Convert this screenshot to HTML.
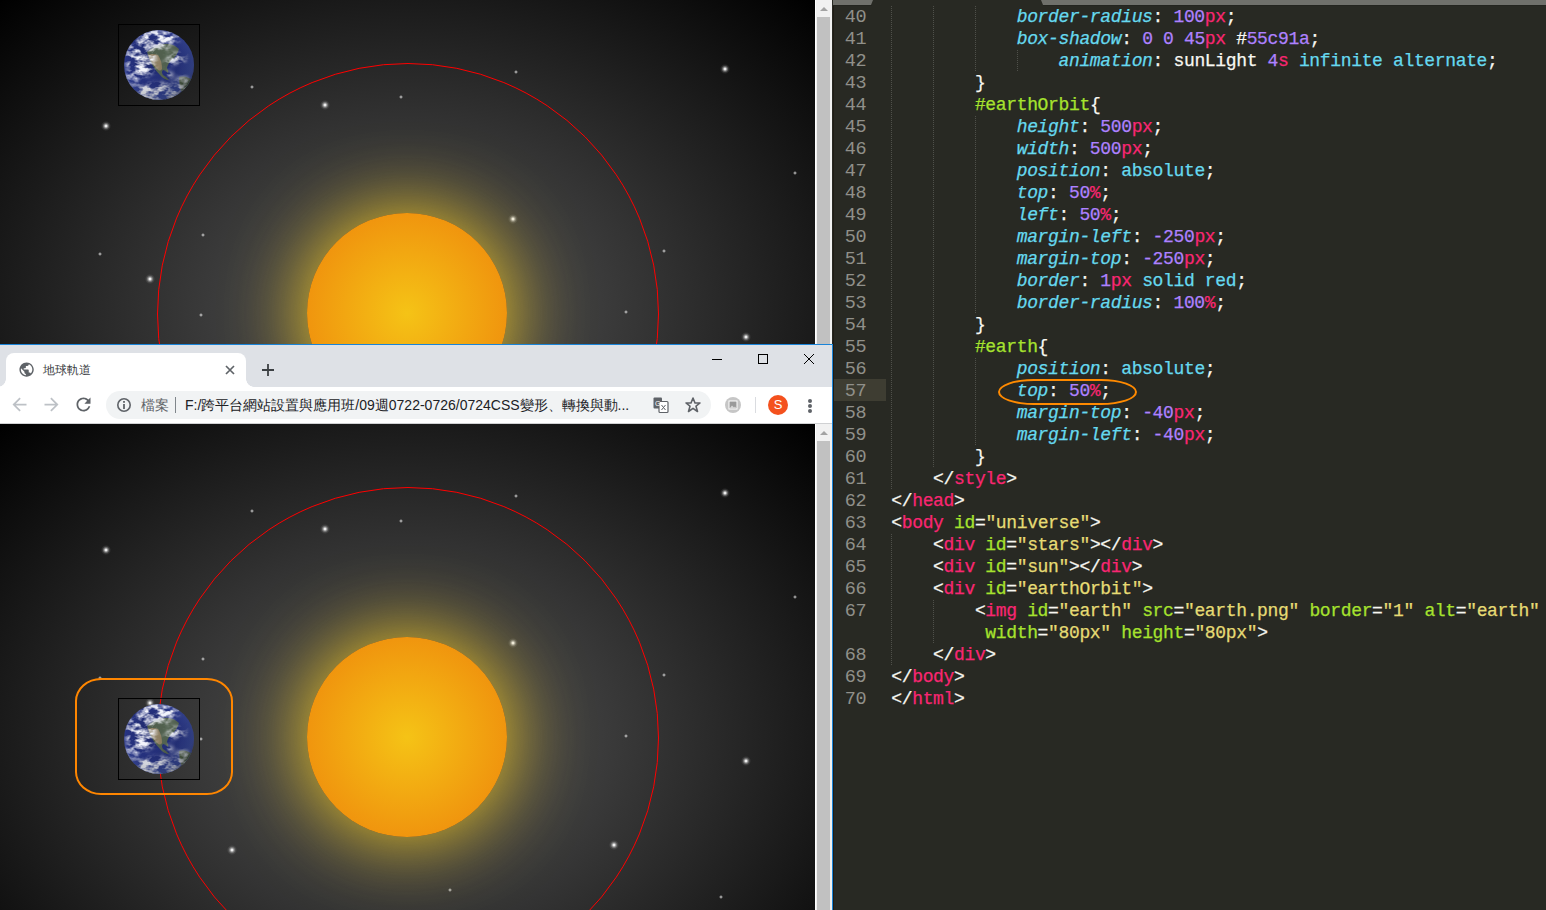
<!DOCTYPE html>
<html><head><meta charset="utf-8">
<style>
*{margin:0;padding:0;box-sizing:border-box}
html,body{width:1546px;height:910px;overflow:hidden;background:#272822;position:relative;font-family:"Liberation Sans",sans-serif}
.abs{position:absolute}
.view{position:absolute;left:0;width:815px;overflow:hidden}
.scene{position:absolute;left:0;top:0;width:815px;height:627px;background:radial-gradient(ellipse farthest-corner at 50% 50%,#595959 0%,#000 100%)}
.sb{position:absolute;width:10px;height:10px;background:radial-gradient(circle closest-side,rgba(255,255,255,1) 0,rgba(255,255,255,.9) 17%,rgba(255,255,255,.45) 40%,rgba(255,255,255,.12) 70%,rgba(255,255,255,0) 100%)}
.ss{position:absolute;width:4px;height:4px;background:radial-gradient(circle closest-side,rgba(255,255,255,.85) 0,rgba(255,255,255,.45) 45%,rgba(255,255,255,0) 100%)}
.sun{position:absolute;left:307px;top:213px;width:200px;height:200px;border-radius:50%;background:radial-gradient(circle closest-side,#f5c316 0%,#f0950e 100%);box-shadow:0 0 80px #f6cc1c}
.glow{display:none}
.orbit{position:absolute;left:157px;top:63px;width:502px;height:502px;border:1px solid #f00;border-radius:50%}
.earth{position:absolute;left:118px;width:82px;height:82px;border:1px solid #000}
.earth svg{position:absolute;left:0;top:0}
.sbar{position:absolute;left:815px;width:17px;background:#f1f1f1;border-left:1px solid #fff}
.sbar .thumb{position:absolute;left:1px;right:2px;top:17px;bottom:0;background:#c1c1c1}
.sbar .arr{position:absolute;left:3.5px;top:7px;width:0;height:0;border-left:4px solid transparent;border-right:4px solid transparent;border-bottom:4px solid #a3a3a3}
#ed{position:absolute;left:833px;top:0;width:713px;height:910px;background:#282923;font-family:"Liberation Mono",monospace;font-size:18px;letter-spacing:-0.35px;line-height:22px}
.ln{position:absolute;left:0;width:33px;margin-top:1px;text-align:right;color:#90908a;font-size:18.5px;letter-spacing:-0.5px}
.cl{position:absolute;white-space:pre;color:#f8f8f2;-webkit-text-stroke:0.25px currentColor}
.cl b{font-weight:normal;color:#f8f8f2}
.cl i{font-style:italic}
.ig{position:absolute;width:1px;height:22px;background:repeating-linear-gradient(to bottom,#4f504a 0 1px,transparent 1px 2px)}
</style></head><body>
<div class="view" style="top:0;height:344px"><div class="scene" style="top:0"><div class="sb" style="left:101.0px;top:121.0px"></div><div class="ss" style="left:249.6px;top:84.6px"></div><div class="sb" style="left:320.0px;top:100.0px"></div><div class="ss" style="left:398.6px;top:95.1px"></div><div class="ss" style="left:514.1px;top:70.1px"></div><div class="sb" style="left:720.0px;top:64.0px"></div><div class="ss" style="left:793.1px;top:171.1px"></div><div class="sb" style="left:508.0px;top:214.0px"></div><div class="ss" style="left:200.5px;top:233.1px"></div><div class="ss" style="left:661.9px;top:249.1px"></div><div class="sb" style="left:144.5px;top:274.0px"></div><div class="ss" style="left:98.1px;top:252.1px"></div><div class="ss" style="left:199.4px;top:313.1px"></div><div class="ss" style="left:623.5px;top:310.1px"></div><div class="sb" style="left:740.6px;top:331.5px"></div><div class="sb" style="left:227.3px;top:420.7px"></div><div class="sb" style="left:608.6px;top:415.9px"></div><div class="ss" style="left:447.8px;top:464.1px"></div><div class="ss" style="left:718.6px;top:470.8px"></div><div class="glow"></div><div class="sun"></div><div class="orbit"></div><div class="earth" style="top:24px"><svg width="80" height="80" viewBox="0 0 80 80"><defs><radialGradient id="oc" cx="42%" cy="42%" r="54%"><stop offset="0" stop-color="#1e2868"/><stop offset=".6" stop-color="#263280"/><stop offset=".86" stop-color="#3a4aa0"/><stop offset="1" stop-color="#4a5ab0"/></radialGradient><radialGradient id="sh" cx="30%" cy="30%" r="78%"><stop offset=".5" stop-color="#000" stop-opacity="0"/><stop offset=".85" stop-color="#000814" stop-opacity=".3"/><stop offset="1" stop-color="#000" stop-opacity=".6"/></radialGradient><filter id="tx" x="0" y="0" width="100%" height="100%"><feTurbulence type="fractalNoise" baseFrequency="0.1 0.16" numOctaves="3" seed="7"/><feColorMatrix values="0 0 0 0 .9  0 0 0 0 .91  0 0 0 0 .97  3.8 0 0 0 -1.45"/></filter><filter id="bl" x="-20%" y="-20%" width="140%" height="140%"><feGaussianBlur stdDeviation="2"/></filter><filter id="bl2" x="-20%" y="-20%" width="140%" height="140%"><feGaussianBlur stdDeviation=".5"/></filter><mask id="cm"><g filter="url(#bl)" fill="#fff"><ellipse cx="22" cy="34" rx="15" ry="19" opacity="1"/><ellipse cx="40" cy="12" rx="22" ry="8" opacity="1"/><ellipse cx="40" cy="68" rx="30" ry="10" opacity="1"/><ellipse cx="58" cy="33" rx="10" ry="5" opacity="1"/><ellipse cx="64" cy="58" rx="8" ry="7" opacity=".8"/><ellipse cx="50" cy="50" rx="5" ry="3" opacity=".8"/><ellipse cx="14" cy="52" rx="8" ry="8" opacity=".7"/><ellipse cx="42" cy="22" rx="9" ry="5" opacity=".75"/><ellipse cx="50" cy="38" rx="6" ry="3" opacity=".7"/><ellipse cx="34" cy="44" rx="5" ry="3" opacity=".7"/></g></mask><clipPath id="ec"><circle cx="40" cy="40" r="35"/></clipPath></defs>
<g clip-path="url(#ec)"><rect width="80" height="80" fill="url(#oc)"/>
<g filter="url(#bl2)"><path d="M28 27 Q34 21 44 19 Q54 18 60 24 Q58 31 53 35 Q49 38 48 43 Q50 46 49 48 Q46 45 44 45 Q42 47 44 50 Q48 52 50 55 Q45 55 41 50 Q37 46 34 41 Q30 35 28 27Z" fill="#5a6a48" opacity=".85"/><path d="M29 30 Q33 28 39 30 Q43 36 43 44 Q41 47 38 44 Q33 39 29 30Z" fill="#958060" opacity=".85"/><path d="M60 52 Q67 50 73 55 Q72 66 64 70 Q60 62 60 52Z" fill="#56664a"/></g>
<rect width="80" height="80" filter="url(#tx)" mask="url(#cm)"/>
<rect width="80" height="80" fill="url(#sh)"/></g></svg>
</div></div></div>
<div class="sbar" style="top:0;height:344px"><div class="arr"></div><div class="thumb"></div></div>
<div id="ed">
<div class="abs" style="left:0;top:0;width:1px;height:910px;background:#1f1c15"></div>
<div class="abs" style="left:0;top:0;width:40px;height:5px;background:#6f706b;clip-path:polygon(0 0,40px 0,38px 5px,0 5px)"></div><div class="abs" style="left:0;top:5px;width:39px;height:1px;background:#23241f"></div><div class="abs" style="left:210px;top:5px;width:503px;height:1px;background:#23241f"></div>
<div class="abs" style="left:208px;top:0;width:505px;height:5px;background:#6f706b;clip-path:polygon(0 0,505px 0,505px 5px,2px 5px)"></div>
<div class="abs" style="left:1px;top:379px;width:52px;height:22px;background:#3e3d32"></div>
<div class="ig" style="top:6px;left:58.3px"></div><div class="ig" style="top:6px;left:100.1px"></div><div class="ig" style="top:6px;left:141.9px"></div><div class="ig" style="top:28px;left:58.3px"></div><div class="ig" style="top:28px;left:100.1px"></div><div class="ig" style="top:28px;left:141.9px"></div><div class="ig" style="top:50px;left:58.3px"></div><div class="ig" style="top:50px;left:100.1px"></div><div class="ig" style="top:50px;left:141.9px"></div><div class="ig" style="top:50px;left:183.7px"></div><div class="ig" style="top:72px;left:58.3px"></div><div class="ig" style="top:72px;left:100.1px"></div><div class="ig" style="top:94px;left:58.3px"></div><div class="ig" style="top:94px;left:100.1px"></div><div class="ig" style="top:116px;left:58.3px"></div><div class="ig" style="top:116px;left:100.1px"></div><div class="ig" style="top:116px;left:141.9px"></div><div class="ig" style="top:138px;left:58.3px"></div><div class="ig" style="top:138px;left:100.1px"></div><div class="ig" style="top:138px;left:141.9px"></div><div class="ig" style="top:160px;left:58.3px"></div><div class="ig" style="top:160px;left:100.1px"></div><div class="ig" style="top:160px;left:141.9px"></div><div class="ig" style="top:182px;left:58.3px"></div><div class="ig" style="top:182px;left:100.1px"></div><div class="ig" style="top:182px;left:141.9px"></div><div class="ig" style="top:204px;left:58.3px"></div><div class="ig" style="top:204px;left:100.1px"></div><div class="ig" style="top:204px;left:141.9px"></div><div class="ig" style="top:226px;left:58.3px"></div><div class="ig" style="top:226px;left:100.1px"></div><div class="ig" style="top:226px;left:141.9px"></div><div class="ig" style="top:248px;left:58.3px"></div><div class="ig" style="top:248px;left:100.1px"></div><div class="ig" style="top:248px;left:141.9px"></div><div class="ig" style="top:270px;left:58.3px"></div><div class="ig" style="top:270px;left:100.1px"></div><div class="ig" style="top:270px;left:141.9px"></div><div class="ig" style="top:292px;left:58.3px"></div><div class="ig" style="top:292px;left:100.1px"></div><div class="ig" style="top:292px;left:141.9px"></div><div class="ig" style="top:314px;left:58.3px"></div><div class="ig" style="top:314px;left:100.1px"></div><div class="ig" style="top:336px;left:58.3px"></div><div class="ig" style="top:336px;left:100.1px"></div><div class="ig" style="top:358px;left:58.3px"></div><div class="ig" style="top:358px;left:100.1px"></div><div class="ig" style="top:358px;left:141.9px"></div><div class="ig" style="top:380px;left:58.3px"></div><div class="ig" style="top:380px;left:100.1px"></div><div class="ig" style="top:380px;left:141.9px"></div><div class="ig" style="top:402px;left:58.3px"></div><div class="ig" style="top:402px;left:100.1px"></div><div class="ig" style="top:402px;left:141.9px"></div><div class="ig" style="top:424px;left:58.3px"></div><div class="ig" style="top:424px;left:100.1px"></div><div class="ig" style="top:424px;left:141.9px"></div><div class="ig" style="top:446px;left:58.3px"></div><div class="ig" style="top:446px;left:100.1px"></div><div class="ig" style="top:468px;left:58.3px"></div><div class="ig" style="top:534px;left:58.3px"></div><div class="ig" style="top:556px;left:58.3px"></div><div class="ig" style="top:578px;left:58.3px"></div><div class="ig" style="top:600px;left:58.3px"></div><div class="ig" style="top:600px;left:100.1px"></div><div class="ig" style="top:622px;left:58.3px"></div><div class="ig" style="top:622px;left:100.1px"></div><div class="ig" style="top:644px;left:58.3px"></div>
<div class="ln" style="top:6px">40</div><div class="cl" style="top:6px;left:183.70px"><i style="color:#66d9ef">border-radius</i><b>: </b><span style="color:#ae81ff">100</span><span style="color:#f92672">px</span><b>;</b></div><div class="ln" style="top:28px">41</div><div class="cl" style="top:28px;left:183.70px"><i style="color:#66d9ef">box-shadow</i><b>: </b><span style="color:#ae81ff">0</span><b> </b><span style="color:#ae81ff">0</span><b> </b><span style="color:#ae81ff">45</span><span style="color:#f92672">px</span><b> #</b><span style="color:#ae81ff">55c91a</span><b>;</b></div><div class="ln" style="top:50px">42</div><div class="cl" style="top:50px;left:225.50px"><i style="color:#66d9ef">animation</i><b>: </b><b>sunLight </b><span style="color:#ae81ff">4</span><span style="color:#f92672">s</span><b> </b><span style="color:#66d9ef">infinite alternate</span><b>;</b></div><div class="ln" style="top:72px">43</div><div class="cl" style="top:72px;left:141.90px"><b>}</b></div><div class="ln" style="top:94px">44</div><div class="cl" style="top:94px;left:141.90px"><span style="color:#a6e22e">#earthOrbit</span><b>{</b></div><div class="ln" style="top:116px">45</div><div class="cl" style="top:116px;left:183.70px"><i style="color:#66d9ef">height</i><b>: </b><span style="color:#ae81ff">500</span><span style="color:#f92672">px</span><b>;</b></div><div class="ln" style="top:138px">46</div><div class="cl" style="top:138px;left:183.70px"><i style="color:#66d9ef">width</i><b>: </b><span style="color:#ae81ff">500</span><span style="color:#f92672">px</span><b>;</b></div><div class="ln" style="top:160px">47</div><div class="cl" style="top:160px;left:183.70px"><i style="color:#66d9ef">position</i><b>: </b><span style="color:#66d9ef">absolute</span><b>;</b></div><div class="ln" style="top:182px">48</div><div class="cl" style="top:182px;left:183.70px"><i style="color:#66d9ef">top</i><b>: </b><span style="color:#ae81ff">50</span><span style="color:#f92672">%</span><b>;</b></div><div class="ln" style="top:204px">49</div><div class="cl" style="top:204px;left:183.70px"><i style="color:#66d9ef">left</i><b>: </b><span style="color:#ae81ff">50</span><span style="color:#f92672">%</span><b>;</b></div><div class="ln" style="top:226px">50</div><div class="cl" style="top:226px;left:183.70px"><i style="color:#66d9ef">margin-left</i><b>: </b><span style="color:#ae81ff">-250</span><span style="color:#f92672">px</span><b>;</b></div><div class="ln" style="top:248px">51</div><div class="cl" style="top:248px;left:183.70px"><i style="color:#66d9ef">margin-top</i><b>: </b><span style="color:#ae81ff">-250</span><span style="color:#f92672">px</span><b>;</b></div><div class="ln" style="top:270px">52</div><div class="cl" style="top:270px;left:183.70px"><i style="color:#66d9ef">border</i><b>: </b><span style="color:#ae81ff">1</span><span style="color:#f92672">px</span><b> </b><span style="color:#66d9ef">solid red</span><b>;</b></div><div class="ln" style="top:292px">53</div><div class="cl" style="top:292px;left:183.70px"><i style="color:#66d9ef">border-radius</i><b>: </b><span style="color:#ae81ff">100</span><span style="color:#f92672">%</span><b>;</b></div><div class="ln" style="top:314px">54</div><div class="cl" style="top:314px;left:141.90px"><b>}</b></div><div class="ln" style="top:336px">55</div><div class="cl" style="top:336px;left:141.90px"><span style="color:#a6e22e">#earth</span><b>{</b></div><div class="ln" style="top:358px">56</div><div class="cl" style="top:358px;left:183.70px"><i style="color:#66d9ef">position</i><b>: </b><span style="color:#66d9ef">absolute</span><b>;</b></div><div class="ln" style="top:380px">57</div><div class="cl" style="top:380px;left:183.70px"><i style="color:#66d9ef">top</i><b>: </b><span style="color:#ae81ff">50</span><span style="color:#f92672">%</span><b>;</b></div><div class="ln" style="top:402px">58</div><div class="cl" style="top:402px;left:183.70px"><i style="color:#66d9ef">margin-top</i><b>: </b><span style="color:#ae81ff">-40</span><span style="color:#f92672">px</span><b>;</b></div><div class="ln" style="top:424px">59</div><div class="cl" style="top:424px;left:183.70px"><i style="color:#66d9ef">margin-left</i><b>: </b><span style="color:#ae81ff">-40</span><span style="color:#f92672">px</span><b>;</b></div><div class="ln" style="top:446px">60</div><div class="cl" style="top:446px;left:141.90px"><b>}</b></div><div class="ln" style="top:468px">61</div><div class="cl" style="top:468px;left:100.10px"><b>&lt;/</b><span style="color:#f92672">style</span><b>&gt;</b></div><div class="ln" style="top:490px">62</div><div class="cl" style="top:490px;left:58.30px"><b>&lt;/</b><span style="color:#f92672">head</span><b>&gt;</b></div><div class="ln" style="top:512px">63</div><div class="cl" style="top:512px;left:58.30px"><b>&lt;</b><span style="color:#f92672">body</span><b> </b><span style="color:#a6e22e">id</span><b>=</b><span style="color:#e6db74">"universe"</span><b>&gt;</b></div><div class="ln" style="top:534px">64</div><div class="cl" style="top:534px;left:100.10px"><b>&lt;</b><span style="color:#f92672">div</span><b> </b><span style="color:#a6e22e">id</span><b>=</b><span style="color:#e6db74">"stars"</span><b>&gt;&lt;/</b><span style="color:#f92672">div</span><b>&gt;</b></div><div class="ln" style="top:556px">65</div><div class="cl" style="top:556px;left:100.10px"><b>&lt;</b><span style="color:#f92672">div</span><b> </b><span style="color:#a6e22e">id</span><b>=</b><span style="color:#e6db74">"sun"</span><b>&gt;&lt;/</b><span style="color:#f92672">div</span><b>&gt;</b></div><div class="ln" style="top:578px">66</div><div class="cl" style="top:578px;left:100.10px"><b>&lt;</b><span style="color:#f92672">div</span><b> </b><span style="color:#a6e22e">id</span><b>=</b><span style="color:#e6db74">"earthOrbit"</span><b>&gt;</b></div><div class="ln" style="top:600px">67</div><div class="cl" style="top:600px;left:141.90px"><b>&lt;</b><span style="color:#f92672">img</span><b> </b><span style="color:#a6e22e">id</span><b>=</b><span style="color:#e6db74">"earth"</span><b> </b><span style="color:#a6e22e">src</span><b>=</b><span style="color:#e6db74">"earth.png"</span><b> </b><span style="color:#a6e22e">border</span><b>=</b><span style="color:#e6db74">"1"</span><b> </b><span style="color:#a6e22e">alt</span><b>=</b><span style="color:#e6db74">"earth"</span></div><div class="cl" style="top:622px;left:152.35px"><span style="color:#a6e22e">width</span><b>=</b><span style="color:#e6db74">"80px"</span><b> </b><span style="color:#a6e22e">height</span><b>=</b><span style="color:#e6db74">"80px"</span><b>&gt;</b></div><div class="ln" style="top:644px">68</div><div class="cl" style="top:644px;left:100.10px"><b>&lt;/</b><span style="color:#f92672">div</span><b>&gt;</b></div><div class="ln" style="top:666px">69</div><div class="cl" style="top:666px;left:58.30px"><b>&lt;/</b><span style="color:#f92672">body</span><b>&gt;</b></div><div class="ln" style="top:688px">70</div><div class="cl" style="top:688px;left:58.30px"><b>&lt;/</b><span style="color:#f92672">html</span><b>&gt;</b></div>
<div class="abs" style="left:164.5px;top:378.5px;width:139px;height:26px;border:2.4px solid #ff8a00;border-radius:36px/13px"></div>
</div>
<div class="abs" style="left:0;top:344px;width:833px;height:566px;border-top:1px solid #1a84d8;border-right:1px solid #1a84d8;background:#dee1e6"></div>
<div class="abs" style="left:0;top:387px;width:832px;height:36px;background:#fff"></div>
<div class="abs" style="left:0;top:423px;width:832px;height:1px;background:#d0d1d3"></div>
<!-- tab -->
<div class="abs" style="left:6px;top:353px;width:240px;height:35px;background:#fff;border-radius:8px 8px 0 0"></div>
<div class="abs" style="left:-2px;top:379px;width:8px;height:8px;background:radial-gradient(circle at 0 0,#dee1e6 7.5px,#fff 8px)"></div>
<div class="abs" style="left:246px;top:379px;width:8px;height:8px;background:radial-gradient(circle at 100% 0,#dee1e6 7.5px,#fff 8px)"></div>
<svg class="abs" style="left:17.5px;top:361.4px" width="17.2" height="17.2" viewBox="0 0 24 24"><path fill="#5f6368" d="M12 2C6.48 2 2 6.48 2 12s4.48 10 10 10 10-4.48 10-10S17.52 2 12 2zm-1 17.93c-3.950-.49-7-3.85-7-7.930 0-.62.08-1.21.21-1.79L9 15v1c0 1.1.9 2 2 2v1.93zm6.9-2.54c-.26-.81-1-1.39-1.9-1.39h-1v-3c0-.55-.45-1-1-1H8v-2h2c.55 0 1-.45 1-1V7h2c1.1 0 2-.9 2-2v-.41c2.93 1.19 5 4.06 5 7.410 0 2.08-.8 3.97-2.1 5.39z"/></svg>
<div class="abs" style="left:43px;top:362px;font-size:12px;line-height:16px;color:#3c4043;white-space:nowrap">地球軌道</div>
<svg class="abs" style="left:224px;top:364px" width="12" height="12" viewBox="0 0 12 12"><path d="M2 2L10 10M10 2L2 10" stroke="#5f6368" stroke-width="1.7"/></svg>
<svg class="abs" style="left:261px;top:363px" width="14" height="14" viewBox="0 0 14 14"><path d="M7 1V13M1 7H13" stroke="#3c4043" stroke-width="1.8"/></svg>
<!-- window controls -->
<div class="abs" style="left:712px;top:359px;width:10px;height:1px;background:#000"></div>
<div class="abs" style="left:758px;top:354px;width:10px;height:10px;border:1px solid #000"></div>
<svg class="abs" style="left:803px;top:353px" width="12" height="12" viewBox="0 0 12 12"><path d="M1 1L11 11M11 1L1 11" stroke="#000" stroke-width="1"/></svg>
<!-- nav -->
<svg class="abs" style="left:8.8px;top:394.2px" width="21" height="21" viewBox="0 0 24 24"><path fill="#bdc1c6" d="M20 11H7.830l5.59-5.59L12 4l-8 8 8 8 1.41-1.41L7.830 13H20v-2z"/></svg>
<svg class="abs" style="left:41px;top:394.2px" width="21" height="21" viewBox="0 0 24 24"><path fill="#bdc1c6" d="M12 4l-1.41 1.41L16.170 11H4v2h12.170l-5.580 5.59L12 20l8-8z"/></svg>
<svg class="abs" style="left:73px;top:394.2px" width="21" height="21" viewBox="0 0 24 24"><path fill="#5f6368" d="M17.65 6.35C16.2 4.9 14.21 4 12 4c-4.42 0-7.99 3.58-7.99 8s3.57 8 7.99 8c3.73 0 6.84-2.55 7.73-6h-2.08c-.82 2.33-3.04 4-5.65 4-3.31 0-6-2.69-6-6s2.690-6 6-6c1.66 0 3.14.69 4.22 1.78L13 11h7V4l-2.35 2.35z"/></svg>
<div class="abs" style="left:106px;top:391px;width:605px;height:28px;background:#f1f3f4;border-radius:14px"></div>
<svg class="abs" style="left:116px;top:397px" width="16" height="16" viewBox="0 0 16 16"><circle cx="8" cy="8" r="6.2" stroke="#5f6368" stroke-width="1.6" fill="none"/><rect x="7.1" y="7" width="1.8" height="5" fill="#5f6368"/><rect x="7.1" y="4" width="1.8" height="1.8" fill="#5f6368"/></svg>
<div class="abs" style="left:141px;top:397px;font-size:14px;line-height:16px;color:#5f6368;white-space:nowrap">檔案</div>
<div class="abs" style="left:175px;top:397px;width:1px;height:16px;background:#80868b"></div>
<div class="abs" style="left:185px;top:396px;font-size:14px;line-height:18px;color:#202124;white-space:nowrap">F:/跨平台網站設置與應用班/09週0722-0726/0724CSS變形、轉換與動...</div>
<svg class="abs" style="left:652px;top:396px" width="18" height="18" viewBox="0 0 18 18"><rect x="1.5" y="1.5" width="8.5" height="11" rx="1" fill="#5f6368"/><rect x="7" y="5.5" width="9" height="11" rx="1" fill="#fff" stroke="#5f6368" stroke-width="1.2"/><text x="3" y="10" font-size="7" fill="#fff" font-family="Liberation Sans">G</text><path d="M9.5 9L13.5 14M13.5 9L9.5 14" stroke="#5f6368" stroke-width="1"/></svg>
<svg class="abs" style="left:684px;top:396px" width="18" height="18" viewBox="0 0 18 18"><path d="M9 2L11 7H16L12 10.2L13.5 15.5L9 12.3L4.5 15.5L6 10.2L2 7H7Z" stroke="#5f6368" stroke-width="1.6" fill="none" stroke-linejoin="round"/></svg>
<svg class="abs" style="left:724px;top:396px" width="18" height="18" viewBox="0 0 18 18"><circle cx="9" cy="9" r="8" fill="#c6c6c6"/><rect x="4.5" y="4.5" width="9" height="9" fill="#fff"/><rect x="5.5" y="5.5" width="7" height="7" fill="#9a9a9a"/><path d="M5.5 12.5L8 9.5L10 11.5L11 10.5L12.5 12.5Z" fill="#fff" opacity=".6"/></svg>
<div class="abs" style="left:755px;top:397px;width:1px;height:16px;background:#dadce0"></div>
<div class="abs" style="left:768px;top:395px;width:20px;height:20px;border-radius:50%;background:#f4511e;color:#fff;font-size:13px;line-height:20px;text-align:center">S</div>
<div class="abs" style="left:808px;top:399px;width:4px;height:4px;border-radius:50%;background:#5f6368"></div>
<div class="abs" style="left:808px;top:404px;width:4px;height:4px;border-radius:50%;background:#5f6368"></div>
<div class="abs" style="left:808px;top:409px;width:4px;height:4px;border-radius:50%;background:#5f6368"></div>
<div class="view" style="top:424px;height:486px"><div class="scene" style="top:0"><div class="sb" style="left:101.0px;top:121.0px"></div><div class="ss" style="left:249.6px;top:84.6px"></div><div class="sb" style="left:320.0px;top:100.0px"></div><div class="ss" style="left:398.6px;top:95.1px"></div><div class="ss" style="left:514.1px;top:70.1px"></div><div class="sb" style="left:720.0px;top:64.0px"></div><div class="ss" style="left:793.1px;top:171.1px"></div><div class="sb" style="left:508.0px;top:214.0px"></div><div class="ss" style="left:200.5px;top:233.1px"></div><div class="ss" style="left:661.9px;top:249.1px"></div><div class="sb" style="left:144.5px;top:274.0px"></div><div class="ss" style="left:98.1px;top:252.1px"></div><div class="ss" style="left:199.4px;top:313.1px"></div><div class="ss" style="left:623.5px;top:310.1px"></div><div class="sb" style="left:740.6px;top:331.5px"></div><div class="sb" style="left:227.3px;top:420.7px"></div><div class="sb" style="left:608.6px;top:415.9px"></div><div class="ss" style="left:447.8px;top:464.1px"></div><div class="ss" style="left:718.6px;top:470.8px"></div><div class="glow"></div><div class="sun"></div><div class="orbit"></div><div class="earth" style="top:274px"><svg width="80" height="80" viewBox="0 0 80 80"><defs><radialGradient id="oc" cx="42%" cy="42%" r="54%"><stop offset="0" stop-color="#1e2868"/><stop offset=".6" stop-color="#263280"/><stop offset=".86" stop-color="#3a4aa0"/><stop offset="1" stop-color="#4a5ab0"/></radialGradient><radialGradient id="sh" cx="30%" cy="30%" r="78%"><stop offset=".5" stop-color="#000" stop-opacity="0"/><stop offset=".85" stop-color="#000814" stop-opacity=".3"/><stop offset="1" stop-color="#000" stop-opacity=".6"/></radialGradient><filter id="tx" x="0" y="0" width="100%" height="100%"><feTurbulence type="fractalNoise" baseFrequency="0.1 0.16" numOctaves="3" seed="7"/><feColorMatrix values="0 0 0 0 .9  0 0 0 0 .91  0 0 0 0 .97  3.8 0 0 0 -1.45"/></filter><filter id="bl" x="-20%" y="-20%" width="140%" height="140%"><feGaussianBlur stdDeviation="2"/></filter><filter id="bl2" x="-20%" y="-20%" width="140%" height="140%"><feGaussianBlur stdDeviation=".5"/></filter><mask id="cm"><g filter="url(#bl)" fill="#fff"><ellipse cx="22" cy="34" rx="15" ry="19" opacity="1"/><ellipse cx="40" cy="12" rx="22" ry="8" opacity="1"/><ellipse cx="40" cy="68" rx="30" ry="10" opacity="1"/><ellipse cx="58" cy="33" rx="10" ry="5" opacity="1"/><ellipse cx="64" cy="58" rx="8" ry="7" opacity=".8"/><ellipse cx="50" cy="50" rx="5" ry="3" opacity=".8"/><ellipse cx="14" cy="52" rx="8" ry="8" opacity=".7"/><ellipse cx="42" cy="22" rx="9" ry="5" opacity=".75"/><ellipse cx="50" cy="38" rx="6" ry="3" opacity=".7"/><ellipse cx="34" cy="44" rx="5" ry="3" opacity=".7"/></g></mask><clipPath id="ec"><circle cx="40" cy="40" r="35"/></clipPath></defs>
<g clip-path="url(#ec)"><rect width="80" height="80" fill="url(#oc)"/>
<g filter="url(#bl2)"><path d="M28 27 Q34 21 44 19 Q54 18 60 24 Q58 31 53 35 Q49 38 48 43 Q50 46 49 48 Q46 45 44 45 Q42 47 44 50 Q48 52 50 55 Q45 55 41 50 Q37 46 34 41 Q30 35 28 27Z" fill="#5a6a48" opacity=".85"/><path d="M29 30 Q33 28 39 30 Q43 36 43 44 Q41 47 38 44 Q33 39 29 30Z" fill="#958060" opacity=".85"/><path d="M60 52 Q67 50 73 55 Q72 66 64 70 Q60 62 60 52Z" fill="#56664a"/></g>
<rect width="80" height="80" filter="url(#tx)" mask="url(#cm)"/>
<rect width="80" height="80" fill="url(#sh)"/></g></svg>
</div></div></div>
<div class="sbar" style="top:424px;height:486px"><div class="arr"></div><div class="thumb"></div></div>
<div class="abs" style="left:75px;top:677.5px;width:158px;height:117.5px;border:2px solid #ff8600;border-radius:26px/23px"></div>

</body></html>
